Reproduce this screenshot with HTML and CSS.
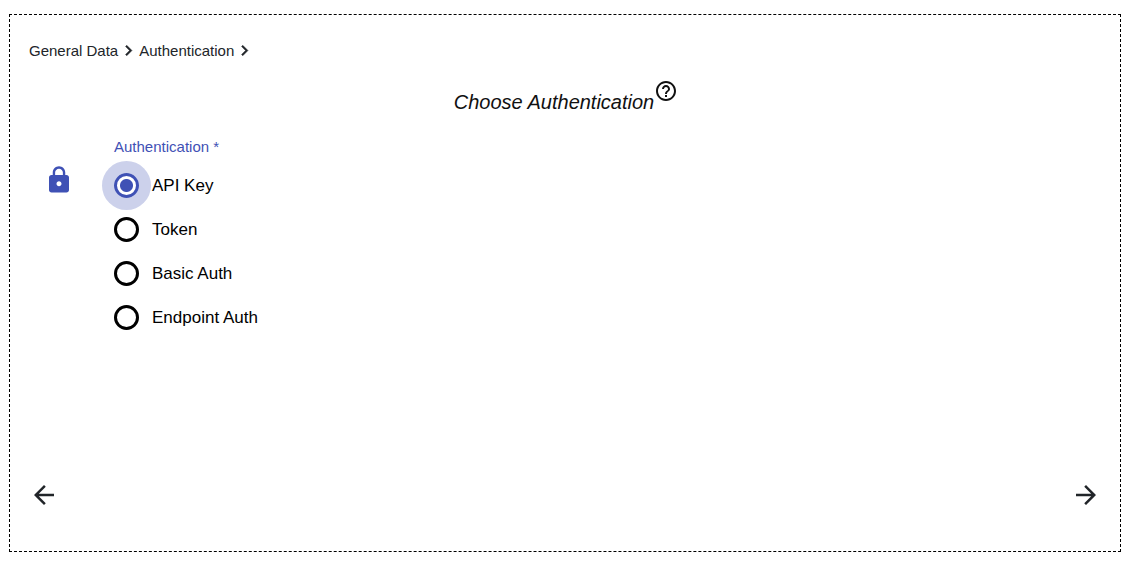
FILE: index.html
```html
<!DOCTYPE html>
<html lang="en">
<head>
<meta charset="utf-8">
<meta name="viewport" content="width=device-width, initial-scale=1">
<title>Choose Authentication</title>
<link rel="stylesheet" href="styles.css">
</head>
<body>
<main class="wizard">
  <nav class="crumbs" aria-label="Steps">
    <span>General Data</span>
    <svg class="chevron" viewBox="0 0 24 24" aria-hidden="true"><path d="M10 6 8.59 7.41 13.17 12l-4.58 4.59L10 18l6-6z"/></svg>
    <span>Authentication</span>
    <svg class="chevron" viewBox="0 0 24 24" aria-hidden="true"><path d="M10 6 8.59 7.41 13.17 12l-4.58 4.59L10 18l6-6z"/></svg>
  </nav>
  <header class="heading">
    <h1 class="title">Choose Authentication</h1>
    <button class="icon-button" type="button" aria-label="Help">
      <svg class="help-icon" viewBox="0 0 24 24"><path d="M11 18h2v-2h-2v2zm1-16C6.48 2 2 6.48 2 12s4.48 10 10 10 10-4.48 10-10S17.52 2 12 2zm0 18c-4.41 0-8-3.59-8-8s3.59-8 8-8 8 3.59 8 8-3.59 8-8 8zm0-14c-2.21 0-4 1.79-4 4h2c0-1.1.9-2 2-2s2 .9 2 2c0 2-3 1.750-3 5h2c0-2.250 3-2.500 3-5 0-2.210-1.790-4-4-4z"/></svg>
    </button>
  </header>
  <form class="form">
    <svg class="lock" viewBox="0 0 24 24" aria-hidden="true"><path d="M18 8h-1V6c0-2.760-2.240-5-5-5S7 3.240 7 6v2H6c-1.100 0-2 .9-2 2v10c0 1.100.9 2 2 2h12c1.100 0 2-.9 2-2V10c0-1.100-.9-2-2-2zm-6 9c-1.100 0-2-.9-2-2s.9-2 2-2 2 .9 2 2-.9 2-2 2zm3.100-9H8.900V6c0-1.710 1.390-3.100 3.100-3.100s3.100 1.390 3.100 3.100v2z"/></svg>
    <fieldset class="options">
      <legend class="legend">Authentication *</legend>
      <label class="option"><input class="radio" type="radio" name="auth" value="api-key" checked>API Key</label>
      <label class="option"><input class="radio" type="radio" name="auth" value="token">Token</label>
      <label class="option"><input class="radio" type="radio" name="auth" value="basic">Basic Auth</label>
      <label class="option"><input class="radio" type="radio" name="auth" value="endpoint">Endpoint Auth</label>
    </fieldset>
  </form>
  <footer class="actions">
    <button class="icon-button" type="button" aria-label="Back">
      <svg class="arrow" viewBox="0 0 24 24"><path d="M20 11H7.830l5.590-5.590L12 4l-8 8 8 8 1.410-1.410L7.830 13H20v-2z"/></svg>
    </button>
    <button class="icon-button" type="button" aria-label="Next">
      <svg class="arrow" viewBox="0 0 24 24"><path d="M12 4l-1.410 1.410L16.170 11H4v2h12.170l-5.580 5.590L12 20l8-8z"/></svg>
    </button>
  </footer>
</main>
</body>
</html>
```
FILE: styles.css
```css
* {
  box-sizing: border-box;
}

body {
  display: flex;
  min-height: 100vh;
  margin: 0;
  padding: 14px 18px 17px 9px;
  background: #fff;
  color: #212529;
  font-family: "Liberation Sans", Arial, sans-serif;
}

svg {
  display: block;
  fill: currentColor;
}

.wizard {
  display: flex;
  flex: 1;
  flex-direction: column;
  padding: 25px 19px 41px;
  border: 1px dashed #000;
}

.crumbs {
  display: flex;
  align-items: center;
  font-size: 15px;
  line-height: 20px;
}

.chevron {
  width: 21px;
  height: 21px;
  stroke: currentColor;
  stroke-width: 0.5;
}

.heading {
  display: flex;
  align-items: flex-start;
  justify-content: center;
  margin-top: 18px;
  padding-left: 2px;
  color: #111;
}

.title {
  margin: 0;
  padding-top: 11px;
  font-size: 20px;
  font-style: italic;
  font-weight: 400;
  line-height: 24px;
}

.icon-button {
  padding: 0;
  border: 0;
  background: none;
  color: inherit;
  cursor: pointer;
}

.help-icon {
  width: 24px;
  height: 24px;
}

.form {
  display: flex;
  gap: 40px;
  margin-top: 23px;
  padding-left: 15px;
}

.lock {
  width: 30px;
  height: 30px;
  margin-top: 28px;
  color: #3f51b5;
}

.options {
  min-width: 0;
  margin: 0;
  padding: 0;
  border: 0;
}

.legend {
  margin-bottom: 16px;
  padding: 0;
  color: #3f51b5;
  font-size: 15px;
  line-height: 20px;
}

.option {
  display: flex;
  gap: 13px;
  align-items: center;
  margin-bottom: 19px;
  color: #000;
  font-size: 17px;
  line-height: 24px;
}

.radio {
  width: 25px;
  height: 25px;
  margin: 0;
  border: 3px solid #000;
  border-radius: 50%;
  appearance: none;
  background: #fff;
}

.radio:checked {
  border-color: #3f51b5;
  background: radial-gradient(circle, #3f51b5 6px, #fff 7px);
  box-shadow: 0 0 0 12px #ccd1eb;
}

.actions {
  display: flex;
  justify-content: space-between;
  margin-top: auto;
}

.arrow {
  width: 30px;
  height: 30px;
}
```
